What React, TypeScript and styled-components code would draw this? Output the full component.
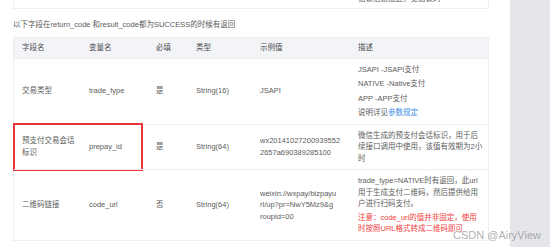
import * as React from 'react';
import styled, { createGlobalStyle } from 'styled-components';

const GlobalStyle = createGlobalStyle`
	html, body {
		margin: 0;
		padding: 0;
		background: #ffffff;
		overflow: hidden;
	}
	body {
		font-family: "Liberation Sans", "Noto Sans CJK SC", sans-serif;
	}
`;

const Color = {
	Text: '#5c5c5c',
	Head: '#4a4a4a',
	Border: '#eceef3',
	HeadBg: '#f3f4f8',
	Link: '#3d8de6',
	Red: '#f23c3c',
	Side: '#e5e6ea'
};

const StyledPage = styled.div`
	display: flex;
	width: 550px;
	height: 247px;
	overflow: hidden;
	position: relative;
`;

const StyledMain = styled.div`
	width: 510px;
	flex-shrink: 0;
	padding-left: 13px;
	box-sizing: border-box;
`;

const StyledSide = styled.div`
	flex: 1;
	background: ${Color.Side};
`;

const StyledPrevTable = styled.div`
	width: 476px;
	box-sizing: border-box;
	margin-top: -20px;
	height: 29px;
	border: 1px solid ${Color.Border};
	border-top: none;
	display: grid;
	grid-template-columns: 67px 67px 40px 64px 98px 138px;
	align-items: end;
	padding-bottom: 4px;
	font-size: 7.5px;
	line-height: 11.5px;
	color: ${Color.Text};
`;

const StyledCaption = styled.div`
	font-size: 7.5px;
	line-height: 11.5px;
	color: ${Color.Text};
	margin-top: 10px;
	margin-bottom: 6px;
	white-space: nowrap;
`;

const StyledTable = styled.div`
	width: 476px;
	box-sizing: border-box;
	border: 1px solid ${Color.Border};
	font-size: 7.5px;
	line-height: 11.5px;
	color: ${Color.Text};
`;

const StyledRow = styled.div<{ $head?: boolean }>`
	display: grid;
	grid-template-columns: 67px 67px 40px 64px 98px 138px;
	align-items: center;
	position: relative;
	background: ${p => (p.$head ? Color.HeadBg : 'transparent')};
	color: ${p => (p.$head ? Color.Head : Color.Text)};
	border-top: ${p => (p.$head ? 'none' : `1px solid ${Color.Border}`)};
	min-height: ${p => (p.$head ? '20px' : '0')};
`;

const StyledCell = styled.div<{ $pad?: number }>`
	padding: ${p => p.$pad ?? 5}px 8px;
	box-sizing: border-box;
	white-space: nowrap;
`;

const StyledLine = styled.span<{ $red?: boolean }>`
	display: block;
	color: ${p => (p.$red ? Color.Red : 'inherit')};
`;

const StyledPara = styled.p<{ $gap: number }>`
	margin: 0 0 ${p => p.$gap}px;
	&:last-child {
		margin-bottom: 0;
	}
`;

const StyledLink = styled.span`
	color: ${Color.Link};
`;

const StyledMark = styled.div`
	position: absolute;
	left: -1px;
	top: -2px;
	width: 130px;
	height: 48px;
	box-sizing: border-box;
	border: 2px solid #e8363b;
	pointer-events: none;
`;

const StyledWatermark = styled.div`
	position: absolute;
	right: 9px;
	bottom: 6px;
	font-family: "Liberation Sans", sans-serif;
	font-size: 11px;
	line-height: 12px;
	color: rgba(120, 120, 120, 0.6);
	white-space: nowrap;
`;

const Lines = (props: { lines: string[]; red?: boolean }) => (
	<>
		{props.lines.map(l => (
			<StyledLine key={l} $red={props.red}>
				{l}
			</StyledLine>
		))}
	</>
);

export default function App() {
	return (
		<StyledPage>
			<GlobalStyle />
			<StyledMain>
				<StyledPrevTable>
					<StyledCell />
					<StyledCell />
					<StyledCell />
					<StyledCell />
					<StyledCell />
					<StyledCell $pad={0}>错误信息描述，见错误码</StyledCell>
				</StyledPrevTable>
				<StyledCaption>以下字段在return_code 和result_code都为SUCCESS的时候有返回</StyledCaption>
				<StyledTable>
					<StyledRow $head>
						<StyledCell $pad={4}>字段名</StyledCell>
						<StyledCell $pad={4}>变量名</StyledCell>
						<StyledCell $pad={4}>必填</StyledCell>
						<StyledCell $pad={4}>类型</StyledCell>
						<StyledCell $pad={4}>示例值</StyledCell>
						<StyledCell $pad={4}>描述</StyledCell>
					</StyledRow>
					<StyledRow>
						<StyledCell>交易类型</StyledCell>
						<StyledCell>trade_type</StyledCell>
						<StyledCell>是</StyledCell>
						<StyledCell>String(16)</StyledCell>
						<StyledCell>JSAPI</StyledCell>
						<StyledCell>
							<StyledPara $gap={3}>JSAPI -JSAPI支付</StyledPara>
							<StyledPara $gap={3}>NATIVE -Native支付</StyledPara>
							<StyledPara $gap={3}>APP -APP支付</StyledPara>
							<StyledPara $gap={3}>
								说明详见<StyledLink>参数规定</StyledLink>
							</StyledPara>
						</StyledCell>
					</StyledRow>
					<StyledRow>
						<StyledCell>
							<Lines lines={['预支付交易会话', '标识']} />
						</StyledCell>
						<StyledCell>prepay_id</StyledCell>
						<StyledCell>是</StyledCell>
						<StyledCell>String(64)</StyledCell>
						<StyledCell>
							<Lines lines={['wx20141027200939552', '2657a690389285100']} />
						</StyledCell>
						<StyledCell>
							<Lines lines={['微信生成的预支付会话标识，用于后', '续接口调用中使用，该值有效期为2小', '时']} />
						</StyledCell>
						<StyledMark />
					</StyledRow>
					<StyledRow>
						<StyledCell>二维码链接</StyledCell>
						<StyledCell>code_url</StyledCell>
						<StyledCell>否</StyledCell>
						<StyledCell>String(64)</StyledCell>
						<StyledCell>
							<Lines lines={['weixin://wxpay/bizpayu', 'rl/up?pr=NwY5Mz9&g', 'roupid=00']} />
						</StyledCell>
						<StyledCell>
							<StyledPara $gap={2}>
								<Lines lines={['trade_type=NATIVE时有返回，此url', '用于生成支付二维码，然后提供给用', '户进行扫码支付。']} />
							</StyledPara>
							<StyledPara $gap={2}>
								<Lines red lines={['注意：code_url的值并非固定，使用', '时按照URL格式转成二维码即可']} />
							</StyledPara>
						</StyledCell>
					</StyledRow>
				</StyledTable>
			</StyledMain>
			<StyledSide />
			<StyledWatermark>CSDN @AiryView</StyledWatermark>
		</StyledPage>
	);
}
